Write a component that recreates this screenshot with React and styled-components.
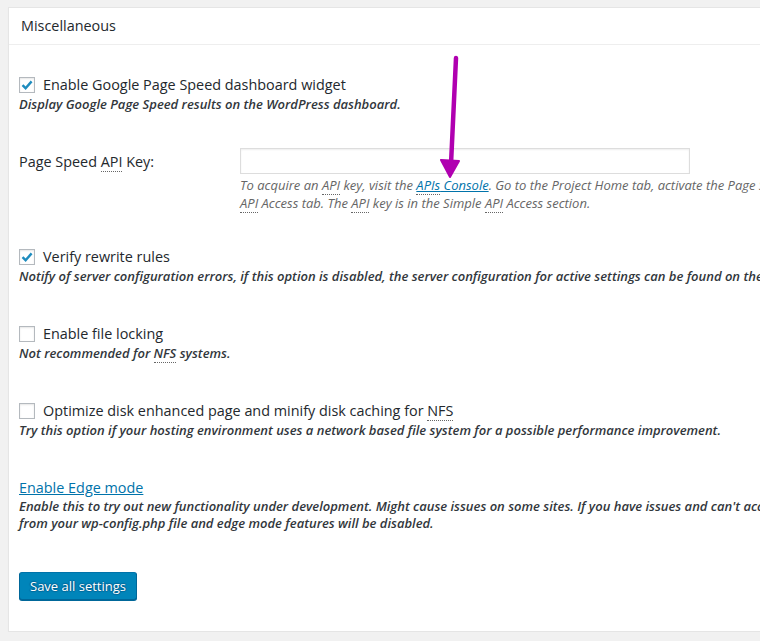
import React from 'react';
import styled, { createGlobalStyle } from 'styled-components';

const GlobalStyle = createGlobalStyle`
  html, body {
    margin: 0;
    padding: 0;
    background: #f1f1f1;
    overflow: hidden;
  }
  body {
    font-family: "Open Sans", "Liberation Sans", sans-serif;
    color: #23282d;
  }
`;

const Page = styled.div`
  position: relative;
  padding: 7px 0 0 8px;
  width: 1200px;
`;

const Postbox = styled.div`
  width: 1100px;
  background: #fff;
  border: 1px solid #e5e5e5;
  box-shadow: 0 1px 1px rgba(0, 0, 0, 0.04);
`;

const BoxTitle = styled.h3`
  margin: 0;
  padding: 8px 12px;
  font-size: 14.4px;
  line-height: 19.6px;
  font-weight: 400;
  border-bottom: 1px solid #eee;
`;

const Inside = styled.div`
  padding: 0 10px 31px;
  line-height: 18px;
`;

const Section = styled.div`
  margin-top: ${(p) => p.$top}px;
`;

const CheckRow = styled.label`
  display: flex;
  align-items: center;
  gap: 8px;
  height: 20px;
  font-size: 14.4px;
  line-height: 20px;
  white-space: nowrap;
`;

const Box = styled.span`
  display: inline-flex;
  align-items: center;
  justify-content: center;
  width: 16px;
  height: 16px;
  box-sizing: border-box;
  border: 1px solid #b4b9be;
  background: #fff;
  box-shadow: inset 0 1px 2px rgba(0, 0, 0, 0.1);
  flex: none;
`;

const Desc = styled.div`
  font-size: 13px;
  line-height: ${(p) => p.$lh || 18}px;
  font-style: italic;
  font-weight: 600;
  color: #32373c;
  white-space: nowrap;
`;

const Note = styled.div`
  margin-top: 2px;
  font-size: 13px;
  line-height: 18px;
  font-style: italic;
  color: #666;
  white-space: nowrap;
`;

const FieldRow = styled.div`
  display: grid;
  grid-template-columns: 221px 1fr;
`;

const FieldLabel = styled.label`
  padding-top: 4px;
  font-size: 14.4px;
  line-height: 20px;
`;

const TextInput = styled.input`
  display: block;
  width: 450px;
  height: 26px;
  box-sizing: border-box;
  margin: 0;
  border: 1px solid #ddd;
  box-shadow: inset 0 1px 2px rgba(0, 0, 0, 0.07);
  background: #fff;
`;

const Abbr = styled.abbr`
  text-decoration: none;
  border-bottom: 1px dotted #666;
`;

const Link = styled.a`
  color: #0073aa;
  text-decoration: underline;
`;

const HeadLink = styled(Link)`
  display: block;
  width: fit-content;
  font-size: 14.4px;
  line-height: 20px;
`;

const Button = styled.button`
  display: block;
  height: 28px;
  margin: 0;
  padding: 0 10px 1px;
  font-family: "Open Sans", "Liberation Sans", sans-serif;
  font-size: 13px;
  line-height: 26px;
  color: #fff;
  background: #0085ba;
  border: 1px solid;
  border-color: #0073aa #006799 #006799;
  border-radius: 3px;
  box-shadow: 0 1px 0 #006799;
  text-shadow: 0 -1px 1px #006799, 1px 0 1px #006799, 0 1px 1px #006799, -1px 0 1px #006799;
  cursor: pointer;
`;

const Arrow = styled.svg`
  position: absolute;
  left: 438px;
  top: 54px;
  pointer-events: none;
`;

function Check({ checked }) {
  return (
    <Box>
      {checked && (
        <svg width="14" height="14" viewBox="0 0 14 14">
          <path d="M2.5 7.2 L5.6 10.2 L11.6 3.4" fill="none" stroke="#1e8cbe" strokeWidth="2.4" />
        </svg>
      )}
    </Box>
  );
}

function CheckOption({ top, checked, label, children }) {
  return (
    <Section $top={top}>
      <CheckRow>
        <Check checked={checked} />
        <span>{label}</span>
      </CheckRow>
      <Desc>{children}</Desc>
    </Section>
  );
}

export default function App() {
  return (
    <Page>
      <GlobalStyle />
      <Postbox>
        <BoxTitle>Miscellaneous</BoxTitle>
        <Inside>
          <CheckOption top={30} checked label="Enable Google Page Speed dashboard widget">
            Display Google Page Speed results on the WordPress dashboard.
          </CheckOption>

          <Section $top={35}>
            <FieldRow>
              <FieldLabel>
                Page Speed <Abbr title="Application Programming Interface">API</Abbr> Key:
              </FieldLabel>
              <div>
                <TextInput type="text" />
                <Note>
                  To acquire an <Abbr>API</Abbr> key, visit the <Link href="#"><Abbr>APIs</Abbr> Console</Link>. Go to the
                  Project Home tab, activate the Page Speed Online <Abbr>API</Abbr>, and accept the Terms of Service. Then go to the
                  <br />
                  <Abbr>API</Abbr> Access tab. The <Abbr>API</Abbr> key is in the Simple <Abbr>API</Abbr> Access section.
                </Note>
              </div>
            </FieldRow>
          </Section>

          <CheckOption top={35} checked label="Verify rewrite rules">
            Notify of server configuration errors, if this option is disabled, the server configuration for active settings can be found on the install tab.
          </CheckOption>

          <CheckOption top={39} label="Enable file locking">
            Not recommended for <Abbr>NFS</Abbr> systems.
          </CheckOption>

          <CheckOption
            top={39}
            label={<>Optimize disk enhanced page and minify disk caching for <Abbr>NFS</Abbr></>}
          >
            Try this option if your hosting environment uses a network based file system for a possible performance improvement.
          </CheckOption>

          <Section $top={39}>
            <HeadLink href="#">Enable Edge mode</HeadLink>
            <Desc $lh={17.5}>
              Enable this to try out new functionality under development. Might cause issues on some sites. If you have issues and can't access the admin, remove the line that sets W3TC_EDGE_MODE
              <br />
              from your wp-config.php file and edge mode features will be disabled.
            </Desc>
          </Section>

          <Section $top={39}>
            <Button type="button">Save all settings</Button>
          </Section>
        </Inside>
      </Postbox>

      <Arrow width="26" height="128" viewBox="0 0 26 128">
        <path d="M18 4 L13 110" stroke="#b000b0" strokeWidth="4.5" strokeLinecap="round" fill="none" />
        <path d="M3 106 L21 107 L12 123 Z" fill="#b000b0" stroke="#b000b0" strokeWidth="2" strokeLinejoin="round" />
      </Arrow>
    </Page>
  );
}
